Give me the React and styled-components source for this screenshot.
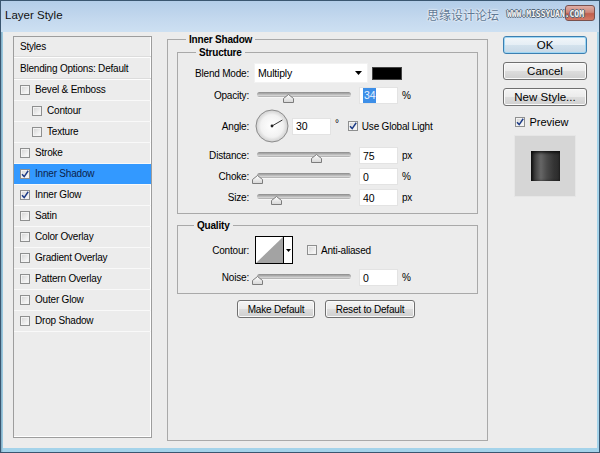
import React from 'react';
import styled, { createGlobalStyle } from 'styled-components';

const Global = createGlobalStyle`
  html, body { margin: 0; padding: 0; background: #fff; }
  body { width: 600px; height: 453px; overflow: hidden; font-family: "Liberation Sans", Arial, sans-serif; color: #000; }
  * { box-sizing: border-box; }
`;

const Window = styled.div`
  width: 600px;
  height: 453px;
  display: flex;
  flex-direction: column;
  border: 1px solid #3a5670;
  background: #93c9e4;
`;

const TitleBar = styled.div`
  position: relative;
  height: 31px;
  flex: none;
  display: flex;
  align-items: flex-start;
  padding: 7px 15px 0 4px;
  background: linear-gradient(to bottom, #b3cde8 0%, #c3d8ee 55%, #cde0f2 100%);
`;

const Title = styled.span`
  font-size: 11.5px;
  line-height: 14px;
  color: #111;
`;

const Watermark = styled.div`
  position: relative;
  z-index: 1;
  margin-left: auto;
  display: flex;
  align-items: center;
  gap: 8px;
  margin-top: -1px;
`;

const WatermarkCJK = styled.span`
  font-family: "Noto Sans CJK SC", sans-serif;
  font-size: 12px;
  line-height: 16px;
  color: #5f7894;
  text-shadow: 0 0 2px #fff, 0 0 2px #fff;
`;

const WatermarkUrl = styled.span`
  font-family: "DejaVu Sans Mono", monospace;
  font-size: 8px;
  font-weight: bold;
  line-height: 10px;
  color: #f4f4f4;
  text-shadow: 1px 0 0 #556677, -1px 0 0 #556677, 0 1px 0 #556677, 0 -1px 0 #556677;
`;

const CloseButton = styled.div`
  position: absolute;
  right: 4px;
  top: 4px;
  width: 30px;
  height: 16px;
  border: 1px solid #6d3a33;
  border-radius: 3px;
  background: linear-gradient(to bottom, #e6a89a 0%, #d27a66 45%, #c24a32 55%, #d66a4e 100%);
  opacity: 0.85;
  display: flex;
  align-items: center;
  justify-content: center;
`;

const Frame = styled.div`
  flex: 1;
  display: flex;
  padding: 0 2px 4px 2px;
  background: linear-gradient(to right, #7fa9bf 0px, #a4d3ea 2px);
`;

const Body = styled.div`
  flex: 1;
  display: flex;
  gap: 15px;
  padding: 1px 10px 7px 10px;
  background: #ececec;
  font-size: 10px;
  letter-spacing: -0.2px;
`;

const StylesPanel = styled.div`
  width: 139px;
  flex: none;
  margin: 3px 0 3px;
  border: 1px solid #9d9d9d;
  box-shadow: inset -1px -1px 0 #fff;
  background: #ececec;
`;

const StyleRow = styled.div`
  height: ${(p) => p.$h || 21}px;
  display: flex;
  align-items: center;
  gap: 5px;
  padding-left: ${(p) => (p.$indent ? 18 : 6)}px;
  border-bottom: 1px solid ${(p) => (p.$strong ? '#fdfdfd' : '#f9f9f9')};
  box-shadow: ${(p) => (p.$strong ? 'inset 0 -1px 0 #dcdcdc' : 'none')};
  background: ${(p) => (p.$selected ? '#3399ff' : 'transparent')};
  color: ${(p) => (p.$selected ? '#0b1f4c' : '#000')};
  line-height: 12px;
`;

const Box = styled.span`
  width: 10px;
  height: 10px;
  flex: none;
  border: 1px solid #8e8f8f;
  background: linear-gradient(135deg, #d3d3d3 0%, #f2f2f2 70%, #fbfbfb 100%);
  box-shadow: inset 0 0 0 1px #f3f3f3;
  display: flex;
  align-items: center;
  justify-content: center;
`;

const Check = ({ on }) => (
  <Box>
    {on && (
      <svg width="8" height="8" viewBox="0 0 8 8">
        <path d="M1 4.2 L3.2 6.6 L7.2 0.8" fill="none" stroke="#1d3c87" strokeWidth="1.5" />
      </svg>
    )}
  </Box>
);

const Group = styled.fieldset`
  margin: ${(p) => p.$m || '0'};
  min-width: 0;
  border: 1px solid #a9a9a9;
  padding: ${(p) => p.$pad || '0'};
`;

const Main = styled(Group)`
  width: 321px;
  flex: none;
`;

const GroupTitle = styled.legend`
  font-weight: bold;
  font-size: 10px;
  line-height: 13px;
  padding: 0 3px;
  margin-left: ${(p) => p.$ml}px;
`;

const FieldRow = styled.div`
  display: flex;
  align-items: center;
  height: ${(p) => p.$h}px;
  margin-top: ${(p) => p.$mt || 0}px;
`;

const Label = styled.span`
  width: 71px;
  flex: none;
  text-align: right;
  margin-right: 5px;
`;

const Select = styled.div`
  width: 114px;
  height: 20px;
  background: #fff;
  border: 1px solid #f2f2f2;
  display: flex;
  align-items: center;
  justify-content: space-between;
  padding: 0 5px 0 3px;
  font-size: 10.5px;
`;

const Swatch = styled.div`
  width: 30px;
  height: 13px;
  margin-left: 4px;
  background: #000;
  border: 1px solid #444;
`;

const SliderBox = styled.div`
  position: relative;
  width: 100px;
  height: 17px;
  flex: none;
  padding: 5px 3px 0;
`;

const Track = styled.div`
  height: 5px;
  border-radius: 3px;
  background: linear-gradient(to bottom, #8a8a8a 0%, #bdbdbd 50%, #d2d2d2 70%, #a8a8a8 100%);
  box-shadow: 0 1px 0 #f6f6f6;
`;

const ThumbWrap = styled.div`
  position: absolute;
  top: 7px;
  width: 11px;
  height: 9px;
  display: flex;
`;

const Slider = ({ value }) => (
  <SliderBox>
    <Track />
    <ThumbWrap style={{ left: `${3 + value * 94 - 5.5}px` }}>
      <svg width="11" height="9" viewBox="0 0 11 9">
        <defs>
          <linearGradient id="tg" x1="0" y1="0" x2="0" y2="1">
            <stop offset="0" stopColor="#ffffff" />
            <stop offset="1" stopColor="#d6d6d6" />
          </linearGradient>
        </defs>
        <path d="M0.5 4.5 L5.5 0.5 L10.5 4.5 L10.5 8.5 L0.5 8.5 Z" fill="url(#tg)" stroke="#7c7c7c" strokeWidth="1" />
      </svg>
    </ThumbWrap>
  </SliderBox>
);

const NumberField = styled.div`
  width: 39px;
  height: 17px;
  flex: none;
  margin-left: ${(p) => p.$ml ?? 5}px;
  background: #fff;
  border: 1px solid #e3e3e3;
  display: flex;
  align-items: center;
  padding-left: 3px;
  font-size: 10.5px;
`;

const Selected = styled.span`
  background: #3d8fe8;
  color: #eaf2ff;
  padding: 1px 1px;
  line-height: 13px;
`;

const Unit = styled.span`
  margin-left: 4px;
`;

const Degree = styled.span`
  margin-left: 4px;
  align-self: flex-start;
  margin-top: 9px;
  font-size: 10px;
`;

const Dial = styled.div`
  width: 34px;
  height: 34px;
  margin-left: 1px;
  flex: none;
  display: flex;
`;

const CheckLabel = styled.div`
  display: flex;
  align-items: center;
  gap: 4px;
  margin-left: ${(p) => p.$ml || 0}px;
`;

const Contour = styled.div`
  width: 38px;
  height: 28px;
  margin-left: 1px;
  flex: none;
  display: flex;
  border: 1px solid #000;
  background: #fff;
`;

const ContourGraph = styled.div`
  flex: 1;
  display: flex;
`;

const ContourArrow = styled.div`
  width: 10px;
  border-left: 1px solid #000;
  display: flex;
  align-items: center;
  justify-content: center;
`;

const ButtonRow = styled.div`
  display: flex;
  justify-content: center;
  gap: 10px;
  margin-top: 6px;
  margin-left: -3px;
`;

const Button = styled.button`
  width: ${(p) => p.$w}px;
  height: 18px;
  padding: 0;
  font-family: inherit;
  font-size: ${(p) => p.$fs || 10}px;
  letter-spacing: inherit;
  color: #000;
  border: 1px solid ${(p) => (p.$default ? '#3c7fb1' : '#707070')};
  border-radius: 3px;
  background: ${(p) =>
    p.$default
      ? 'linear-gradient(to bottom, #f2f6f9 0%, #e5eef5 50%, #d4e2ed 51%, #c7d8e6 100%)'
      : 'linear-gradient(to bottom, #f4f4f4 0%, #ebebeb 50%, #dddddd 51%, #cfcfcf 100%)'};
  box-shadow: inset 0 0 0 1px ${(p) => (p.$default ? '#9fd6f3' : '#fafafa')};
`;

const RightColumn = styled.div`
  width: 84px;
  flex: none;
  margin-top: 3px;
  display: flex;
  flex-direction: column;
  align-items: center;
  gap: 8px;
  font-size: 11px;
  letter-spacing: 0;
`;

const PreviewRow = styled(CheckLabel)`
  height: 14px;
  margin-top: 1px;
  margin-right: 6px;
`;

const PreviewBox = styled.div`
  width: 62px;
  height: 62px;
  margin-top: -2px;
  background: #d6d6d6;
  border: 1px solid #e6e6e6;
  display: flex;
  align-items: center;
  justify-content: center;
`;

const PreviewSquare = styled.div`
  width: 29px;
  height: 30px;
  background: linear-gradient(to right, #262626 0%, #4a4a4a 20%, #666 34%, #4a4a4a 55%, #333 80%, #2b2b2b 100%);
  box-shadow: inset 0 2px 3px rgba(0, 0, 0, 0.6), inset 2px 0 3px rgba(0, 0, 0, 0.5);
`;

const styleItems = [
  { label: 'Bevel & Emboss' },
  { label: 'Contour', indent: true },
  { label: 'Texture', indent: true },
  { label: 'Stroke' },
  { label: 'Inner Shadow', on: true, selected: true },
  { label: 'Inner Glow', on: true },
  { label: 'Satin' },
  { label: 'Color Overlay' },
  { label: 'Gradient Overlay' },
  { label: 'Pattern Overlay' },
  { label: 'Outer Glow' },
  { label: 'Drop Shadow' },
];

export default function App() {
  return (
    <>
      <Global />
      <Window>
        <TitleBar>
          <Title>Layer Style</Title>
          <Watermark>
            <WatermarkCJK>思缘设计论坛</WatermarkCJK>
            <WatermarkUrl>WWW.MISSYUAN.COM</WatermarkUrl>
          </Watermark>
          <CloseButton>
            <svg width="10" height="9" viewBox="0 0 10 9">
              <path d="M1.5 1 L8.5 8 M8.5 1 L1.5 8" stroke="#fff" strokeWidth="2" />
            </svg>
          </CloseButton>
        </TitleBar>
        <Frame>
          <Body>
            <StylesPanel>
              <StyleRow $strong>Styles</StyleRow>
              <StyleRow $h={22} $strong>Blending Options: Default</StyleRow>
              {styleItems.map((it) => (
                <StyleRow key={it.label} $indent={it.indent} $selected={it.selected}>
                  <Check on={it.on} />
                  <span>{it.label}</span>
                </StyleRow>
              ))}
            </StylesPanel>

            <Main $pad="0 9px">
              <GroupTitle $ml={9}>Inner Shadow</GroupTitle>
              <Group>
                <GroupTitle $ml={18}>Structure</GroupTitle>
                <FieldRow $h={20} $mt={4}>
                  <Label>Blend Mode:</Label>
                  <Select>
                    <span>Multiply</span>
                    <svg width="7" height="4" viewBox="0 0 7 4">
                      <path d="M0 0 H7 L3.5 4 Z" fill="#000" />
                    </svg>
                  </Select>
                  <Swatch />
                </FieldRow>
                <FieldRow $h={17} $mt={4}>
                  <Label>Opacity:</Label>
                  <Slider value={0.34} />
                  <NumberField>
                    <Selected>34</Selected>
                  </NumberField>
                  <Unit>%</Unit>
                </FieldRow>
                <FieldRow $h={34} $mt={5}>
                  <Label>Angle:</Label>
                  <Dial>
                    <svg width="34" height="34" viewBox="0 0 34 34">
                      <defs>
                        <radialGradient id="dg" cx="0.5" cy="0.5" r="0.5">
                          <stop offset="0" stopColor="#ffffff" />
                          <stop offset="0.7" stopColor="#f2f2f2" />
                          <stop offset="1" stopColor="#cfcfcf" />
                        </radialGradient>
                      </defs>
                      <circle cx="17" cy="17" r="16" fill="url(#dg)" stroke="#8c8c8c" strokeWidth="1" />
                      <line x1="17" y1="17" x2="27.4" y2="11" stroke="#333" strokeWidth="1" />
                      <circle cx="17" cy="17" r="1.4" fill="#222" />
                    </svg>
                  </Dial>
                  <NumberField $ml={3}>30</NumberField>
                  <Degree>°</Degree>
                  <CheckLabel $ml={9}>
                    <Check on />
                    <span>Use Global Light</span>
                  </CheckLabel>
                </FieldRow>
                <FieldRow $h={17} $mt={4}>
                  <Label>Distance:</Label>
                  <Slider value={0.63} />
                  <NumberField>75</NumberField>
                  <Unit>px</Unit>
                </FieldRow>
                <FieldRow $h={17} $mt={4}>
                  <Label>Choke:</Label>
                  <Slider value={0.01} />
                  <NumberField>0</NumberField>
                  <Unit>%</Unit>
                </FieldRow>
                <FieldRow $h={17} $mt={4}>
                  <Label>Size:</Label>
                  <Slider value={0.21} />
                  <NumberField>40</NumberField>
                  <Unit>px</Unit>
                </FieldRow>
                <FieldRow $h={7} />
              </Group>

              <Group $m="5px 0 0">
                <GroupTitle $ml={16}>Quality</GroupTitle>
                <FieldRow $h={28} $mt={4}>
                  <Label>Contour:</Label>
                  <Contour>
                    <ContourGraph>
                      <svg width="27" height="26" viewBox="0 0 27 26" preserveAspectRatio="none">
                        <path d="M0 26 L27 0 L27 26 Z" fill="#a3a3a3" />
                      </svg>
                    </ContourGraph>
                    <ContourArrow>
                      <svg width="5" height="3" viewBox="0 0 5 3">
                        <path d="M0 0 H5 L2.5 3 Z" fill="#000" />
                      </svg>
                    </ContourArrow>
                  </Contour>
                  <CheckLabel $ml={14}>
                    <Check />
                    <span>Anti-aliased</span>
                  </CheckLabel>
                </FieldRow>
                <FieldRow $h={17} $mt={5}>
                  <Label>Noise:</Label>
                  <Slider value={0.01} />
                  <NumberField>0</NumberField>
                  <Unit>%</Unit>
                </FieldRow>
                <FieldRow $h={7} />
              </Group>

              <ButtonRow>
                <Button $w={78}>Make Default</Button>
                <Button $w={90}>Reset to Default</Button>
              </ButtonRow>
            </Main>

            <RightColumn>
              <Button $w={84} $fs={11.5} $default>OK</Button>
              <Button $w={84} $fs={11.5}>Cancel</Button>
              <Button $w={84} $fs={11.5}>New Style...</Button>
              <PreviewRow>
                <Check on />
                <span>Preview</span>
              </PreviewRow>
              <PreviewBox>
                <PreviewSquare />
              </PreviewBox>
            </RightColumn>
          </Body>
        </Frame>
      </Window>
    </>
  );
}
